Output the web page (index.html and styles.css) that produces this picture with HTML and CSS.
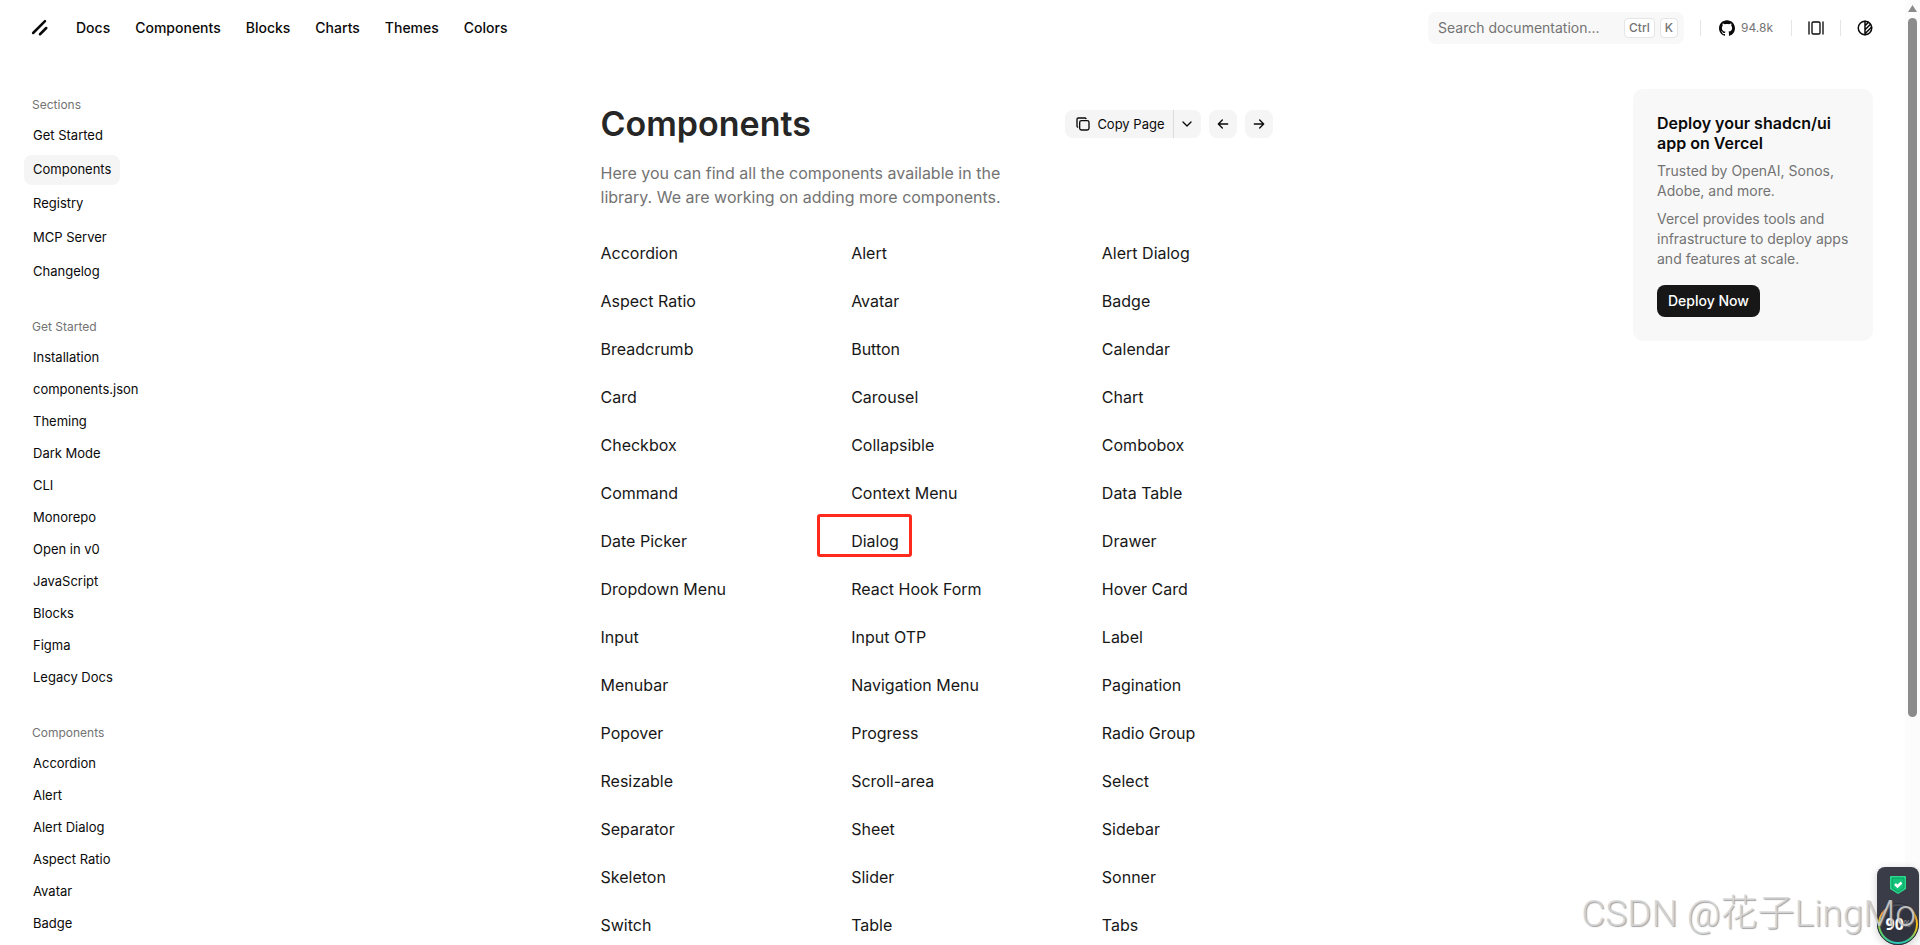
FILE: index.html
```html
<!DOCTYPE html>
<html lang="en">
<head>
    <meta charset="UTF-8">
    <meta name="viewport" content="width=device-width, initial-scale=1.0">
    <title>Components - shadcn/ui</title>
    <link rel="stylesheet" href="styles.css">
</head>
<body>
    <div class="page">
        <header class="header">
            <a class="icon-btn" href="#" aria-label="shadcn/ui">
                <svg width="20" height="20" viewBox="0 0 256 256" fill="none" stroke="currentColor" stroke-width="32" stroke-linecap="round">
                    <line x1="208" y1="128" x2="128" y2="208"/>
                    <line x1="192" y1="40" x2="40" y2="192"/>
                </svg>
            </a>
            <nav class="main-nav">
                <a href="#">Docs</a>
                <a href="#">Components</a>
                <a href="#">Blocks</a>
                <a href="#">Charts</a>
                <a href="#">Themes</a>
                <a href="#">Colors</a>
            </nav>
            <div class="header-right">
                <button class="search" type="button">
                    <span>Search documentation...</span>
                    <kbd>Ctrl</kbd>
                    <kbd>K</kbd>
                </button>
                <span class="divider"></span>
                <a class="github" href="#">
                    <svg width="16" height="16" viewBox="0 0 24 24" fill="currentColor">
                        <path d="M12 .297c-6.63 0-12 5.373-12 12 0 5.303 3.438 9.8 8.205 11.385.6.113.82-.258.82-.577 0-.285-.01-1.04-.015-2.04-3.338.724-4.042-1.61-4.042-1.61C4.422 18.07 3.633 17.7 3.633 17.7c-1.087-.744.084-.729.084-.729 1.205.084 1.838 1.236 1.838 1.236 1.07 1.835 2.809 1.305 3.495.998.108-.776.417-1.305.76-1.605-2.665-.3-5.466-1.332-5.466-5.93 0-1.31.465-2.38 1.235-3.22-.135-.303-.54-1.523.105-3.176 0 0 1.005-.322 3.3 1.23.96-.267 1.98-.399 3-.405 1.02.006 2.04.138 3 .405 2.28-1.552 3.285-1.23 3.285-1.23.645 1.653.24 2.873.12 3.176.765.84 1.23 1.91 1.23 3.22 0 4.61-2.805 5.625-5.475 5.92.42.36.81 1.096.81 2.22 0 1.606-.015 2.896-.015 3.286 0 .315.21.69.825.57C20.565 22.092 24 17.592 24 12.297c0-6.627-5.373-12-12-12"/>
                    </svg>
                    <span>94.8k</span>
                </a>
                <span class="divider"></span>
                <button class="icon-btn" type="button" aria-label="Toggle layout">
                    <svg width="16" height="16" viewBox="0 0 24 24" fill="none" stroke="currentColor" stroke-width="2" stroke-linecap="round">
                        <rect x="6" y="3" width="12" height="18" rx="2"/>
                        <path d="M1.500 3v18M22.500 3v18"/>
                    </svg>
                </button>
                <span class="divider"></span>
                <button class="icon-btn" type="button" aria-label="Toggle theme">
                    <svg width="18" height="18" viewBox="0 0 24 24" fill="none" stroke="currentColor" stroke-width="2" stroke-linecap="round" stroke-linejoin="round">
                        <circle cx="12" cy="12" r="9"/>
                        <path d="M12 3v18M12 9l4.650-4.650M12 14.300l7.370-7.370M12 19.600l8.850-8.850"/>
                    </svg>
                </button>
            </div>
        </header>

        <div class="layout">
            <aside class="sidebar">
                <section class="sections">
                    <h2>Sections</h2>
                    <ul>
                        <li><a href="#">Get Started</a></li>
                        <li><a class="active" href="#">Components</a></li>
                        <li><a href="#">Registry</a></li>
                        <li><a href="#">MCP Server</a></li>
                        <li><a href="#">Changelog</a></li>
                    </ul>
                </section>
                <section>
                    <h2>Get Started</h2>
                    <ul>
                        <li><a href="#">Installation</a></li>
                        <li><a href="#">components.json</a></li>
                        <li><a href="#">Theming</a></li>
                        <li><a href="#">Dark Mode</a></li>
                        <li><a href="#">CLI</a></li>
                        <li><a href="#">Monorepo</a></li>
                        <li><a href="#">Open in v0</a></li>
                        <li><a href="#">JavaScript</a></li>
                        <li><a href="#">Blocks</a></li>
                        <li><a href="#">Figma</a></li>
                        <li><a href="#">Legacy Docs</a></li>
                    </ul>
                </section>
                <section>
                    <h2>Components</h2>
                    <ul>
                        <li><a href="#">Accordion</a></li>
                        <li><a href="#">Alert</a></li>
                        <li><a href="#">Alert Dialog</a></li>
                        <li><a href="#">Aspect Ratio</a></li>
                        <li><a href="#">Avatar</a></li>
                        <li><a href="#">Badge</a></li>
                    </ul>
                </section>
            </aside>

            <main class="content">
                <div class="title-row">
                    <h1>Components</h1>
                    <div class="actions">
                        <div class="copy-group">
                            <button class="copy" type="button">
                                <svg width="16" height="16" viewBox="0 0 24 24" fill="none" stroke="currentColor" stroke-width="2" stroke-linecap="round" stroke-linejoin="round">
                                    <path d="M7 9.667a2.667 2.667 0 0 1 2.667-2.667h8.666a2.667 2.667 0 0 1 2.667 2.667v8.666a2.667 2.667 0 0 1-2.667 2.667h-8.666a2.667 2.667 0 0 1-2.667-2.667z"/>
                                    <path d="M4.012 16.737a2 2 0 0 1-1.012-1.737v-10c0-1.100.900-2 2-2h10c.750 0 1.158.385 1.500 1"/>
                                </svg>
                                Copy Page
                            </button>
                            <button class="square" type="button" aria-label="More options">
                                <svg width="16" height="16" viewBox="0 0 24 24" fill="none" stroke="currentColor" stroke-width="2" stroke-linecap="round" stroke-linejoin="round">
                                    <path d="M6 9l6 6l6-6"/>
                                </svg>
                            </button>
                        </div>
                        <a class="square" href="#" aria-label="Previous">
                            <svg width="16" height="16" viewBox="0 0 24 24" fill="none" stroke="currentColor" stroke-width="2" stroke-linecap="round" stroke-linejoin="round">
                                <path d="M5 12h14M5 12l6 6M5 12l6-6"/>
                            </svg>
                        </a>
                        <a class="square" href="#" aria-label="Next">
                            <svg width="16" height="16" viewBox="0 0 24 24" fill="none" stroke="currentColor" stroke-width="2" stroke-linecap="round" stroke-linejoin="round">
                                <path d="M5 12h14M13 18l6-6M13 6l6 6"/>
                            </svg>
                        </a>
                    </div>
                </div>
                <p class="lead">Here you can find all the components available in the library. We are working on adding more components.</p>

                <div class="component-grid">
                    <a href="#">Accordion</a>
                    <a href="#">Alert</a>
                    <a href="#">Alert Dialog</a>
                    <a href="#">Aspect Ratio</a>
                    <a href="#">Avatar</a>
                    <a href="#">Badge</a>
                    <a href="#">Breadcrumb</a>
                    <a href="#">Button</a>
                    <a href="#">Calendar</a>
                    <a href="#">Card</a>
                    <a href="#">Carousel</a>
                    <a href="#">Chart</a>
                    <a href="#">Checkbox</a>
                    <a href="#">Collapsible</a>
                    <a href="#">Combobox</a>
                    <a href="#">Command</a>
                    <a href="#">Context Menu</a>
                    <a href="#">Data Table</a>
                    <a href="#">Date Picker</a>
                    <a class="marked" href="#">Dialog</a>
                    <a href="#">Drawer</a>
                    <a href="#">Dropdown Menu</a>
                    <a href="#">React Hook Form</a>
                    <a href="#">Hover Card</a>
                    <a href="#">Input</a>
                    <a href="#">Input OTP</a>
                    <a href="#">Label</a>
                    <a href="#">Menubar</a>
                    <a href="#">Navigation Menu</a>
                    <a href="#">Pagination</a>
                    <a href="#">Popover</a>
                    <a href="#">Progress</a>
                    <a href="#">Radio Group</a>
                    <a href="#">Resizable</a>
                    <a href="#">Scroll-area</a>
                    <a href="#">Select</a>
                    <a href="#">Separator</a>
                    <a href="#">Sheet</a>
                    <a href="#">Sidebar</a>
                    <a href="#">Skeleton</a>
                    <a href="#">Slider</a>
                    <a href="#">Sonner</a>
                    <a href="#">Switch</a>
                    <a href="#">Table</a>
                    <a href="#">Tabs</a>
                </div>
            </main>

            <aside class="promo-column">
                <div class="promo">
                    <h3>Deploy your shadcn/ui app on Vercel</h3>
                    <p>Trusted by OpenAI, Sonos, Adobe, and more.</p>
                    <p>Vercel provides tools and infrastructure to deploy apps and features at scale.</p>
                    <a class="deploy" href="#">Deploy Now</a>
                </div>
            </aside>
        </div>
    </div>

    <div class="scrollbar">
        <span class="scroll-arrow"></span>
        <span class="scroll-thumb"></span>
    </div>

    <div class="widget">
        <svg class="shield" width="16" height="18" viewBox="0 0 16 18">
            <path d="M1 0h14a1 1 0 0 1 1 1v12l-8 5l-8-5v-12a1 1 0 0 1 1-1z" fill="#2bd98c"/>
            <path d="M2 2h12v10l-6 4l-6-4z" fill="#12c37a" stroke="#0c9a63" stroke-width="1"/>
            <path d="M5 8l2.500 2.500l4-4" fill="none" stroke="#fff" stroke-width="2.500"/>
        </svg>
        <div class="gauge"><div class="gauge-inner"><b>90</b><small>%</small></div></div>
    </div>
    <div class="watermark">CSDN @花子LingMo</div>
</body>
</html>
```
FILE: styles.css
```css
*, *::before {
    box-sizing: border-box;
}
body {
    margin: 0;
    height: 100vh;
    display: flex;
    overflow: hidden;
    position: relative;
    background: #fff;
    color: #0a0a0a;
    font-family: Inter, "Liberation Sans", sans-serif;
    font-size: 16px;
    line-height: 24px;
}
a {
    color: inherit;
    text-decoration: none;
}
button {
    border: 0;
    padding: 0;
    background: none;
    color: inherit;
    font: inherit;
    cursor: pointer;
}
h1, h2, h3, p, ul {
    margin: 0;
    padding: 0;
}
ul {
    list-style: none;
}
svg {
    flex-shrink: 0;
}
.page {
    flex: 1;
    min-width: 0;
}

/* Header */
.header {
    height: 56px;
    padding: 0 24px;
    display: flex;
    align-items: center;
    gap: 10px;
}
.icon-btn {
    width: 32px;
    height: 32px;
    display: flex;
    align-items: center;
    justify-content: center;
}
.main-nav {
    display: flex;
    gap: 5px;
    font-size: 14px;
    font-weight: 500;
}
.main-nav a {
    padding: 0 10px;
}
.header-right {
    margin-left: auto;
    display: flex;
    align-items: center;
    gap: 8px;
}
.search {
    width: 256px;
    height: 32px;
    margin-right: 8px;
    padding: 0 6px 0 10px;
    display: flex;
    align-items: center;
    gap: 5px;
    border-radius: 8px;
    background: #f8f8f8;
    color: #737373;
    font-size: 14px;
}
.search span {
    flex: 1;
    text-align: left;
}
.search kbd {
    height: 20px;
    padding: 0 4px;
    border: 1px solid #e5e5e5;
    border-radius: 4px;
    background: #fff;
    font-family: inherit;
    font-size: 12px;
    font-weight: 500;
    line-height: 18px;
}
.divider {
    width: 1px;
    height: 16px;
    background: #e5e5e5;
}
.github {
    height: 32px;
    padding: 0 10px;
    display: flex;
    align-items: center;
    gap: 6px;
}
.github span {
    color: #737373;
    font-size: 12px;
}

/* Layout */
.layout {
    display: grid;
    grid-template-columns: 240px 1fr 288px;
    padding: 0 8px 0 24px;
}
.sidebar {
    padding-top: 33px;
    display: flex;
    flex-direction: column;
    gap: 24px;
}
.sidebar h2 {
    padding-left: 8px;
    color: #737373;
    font-size: 12px;
    font-weight: 400;
    line-height: 32px;
}
.sidebar ul {
    display: flex;
    flex-direction: column;
    align-items: flex-start;
    gap: 2px;
}
.sidebar .sections ul {
    gap: 4px;
}
.sidebar li a {
    display: block;
    padding: 0 9px 2px;
    border-radius: 8px;
    font-size: 13px;
    font-weight: 400;
    line-height: 28px;
}
.sidebar a.active {
    background: #f5f5f5;
}

/* Content */
.content {
    width: 100%;
    max-width: 672px;
    margin: 0 auto;
    padding-top: 48px;
}
.title-row {
    display: flex;
    align-items: center;
    justify-content: space-between;
}
.title-row h1 {
    color: #262626;
    font-size: 34px;
    font-weight: 600;
    line-height: 40px;
}
.actions, .copy-group {
    display: flex;
}
.actions {
    gap: 8px;
}
.copy-group {
    border-radius: 8px;
    background: #f5f5f5;
}
.copy {
    height: 28px;
    padding: 0 8px 0 10px;
    display: flex;
    align-items: center;
    gap: 6px;
    font-size: 13px;
    font-weight: 400;
}
.square {
    width: 28px;
    height: 28px;
    display: flex;
    align-items: center;
    justify-content: center;
    border-radius: 8px;
    background: #f5f5f5;
}
.copy-group .square {
    border-left: 1px solid #dcdcdc;
    border-radius: 0 8px 8px 0;
}
.lead {
    max-width: 420px;
    margin-top: 17px;
    color: #737373;
}
.component-grid {
    margin-top: 32px;
    display: grid;
    grid-template-columns: repeat(3, 1fr);
    gap: 24px 80px;
    color: #171717;
}
.component-grid a {
    white-space: nowrap;
}
.marked {
    position: relative;
}
.marked::before {
    content: "";
    position: absolute;
    left: -34px;
    top: -15px;
    width: 95px;
    height: 43px;
    border: 3px solid #ff2a1c;
    border-radius: 3px;
}

/* Promo card */
.promo-column {
    padding: 33px 24px 0;
}
.promo {
    padding: 24px;
    display: flex;
    flex-direction: column;
    align-items: flex-start;
    gap: 8px;
    border-radius: 10px;
    background: #f8f8f8;
    color: #737373;
    font-size: 14px;
    line-height: 20px;
}
.promo h3 {
    color: #0a0a0a;
    font-size: 16px;
    font-weight: 600;
    line-height: 20px;
}
.deploy {
    margin-top: 8px;
    padding: 0 11px;
    border-radius: 8px;
    background: #171717;
    color: #fff;
    font-weight: 500;
    line-height: 32px;
}

/* Scrollbar */
.scrollbar {
    width: 15px;
    height: 100vh;
    padding: 5px 3px 0;
    background: #fcfcfc;
}
.scroll-arrow {
    display: block;
    height: 7px;
    background: #8b8b8b;
    clip-path: polygon(50% 0, 100% 100%, 0 100%);
}
.scroll-thumb {
    display: block;
    height: 74vh;
    margin-top: 6px;
    border-radius: 5px;
    background: #8b8b8b;
}

/* Floating widget and watermark */
.widget {
    position: absolute;
    right: 1px;
    bottom: 0;
    width: 42px;
    height: 78px;
    padding-top: 9px;
    display: flex;
    flex-direction: column;
    align-items: center;
    justify-content: space-between;
    border-radius: 8px 8px 21px 21px;
    background: #3a3c47;
    box-shadow: 0 2px 8px rgba(0, 0, 0, 0.2);
}
.gauge {
    width: 42px;
    height: 42px;
    padding: 2px;
    border: 1px solid #2e303a;
    border-radius: 50%;
    background: conic-gradient(#4a4c57 0 8%, #f5a623 16%, #f0c419 28%, #2bc8a0 42%, #2bc8c0 52%, #5fd068 68%, #c8d43c 76%, #f59a3c 84%, #4a4c57 92%);
}
.gauge-inner {
    height: 100%;
    display: flex;
    align-items: center;
    justify-content: center;
    border-radius: 50%;
    background: #30323e;
    color: #fff;
    font-family: "Noto Sans", sans-serif;
}
.gauge b {
    font-size: 16px;
}
.gauge small {
    color: #a5a6ac;
    font-size: 8px;
}
.watermark {
    position: absolute;
    right: 4px;
    bottom: 7px;
    color: rgba(215, 215, 215, 0.85);
    font-family: Roboto, "Noto Sans CJK SC", sans-serif;
    font-size: 37px;
    font-weight: 300;
    line-height: 48px;
    text-shadow: 1px 1px 1px rgba(100, 100, 100, 0.6);
    white-space: nowrap;
}
```
